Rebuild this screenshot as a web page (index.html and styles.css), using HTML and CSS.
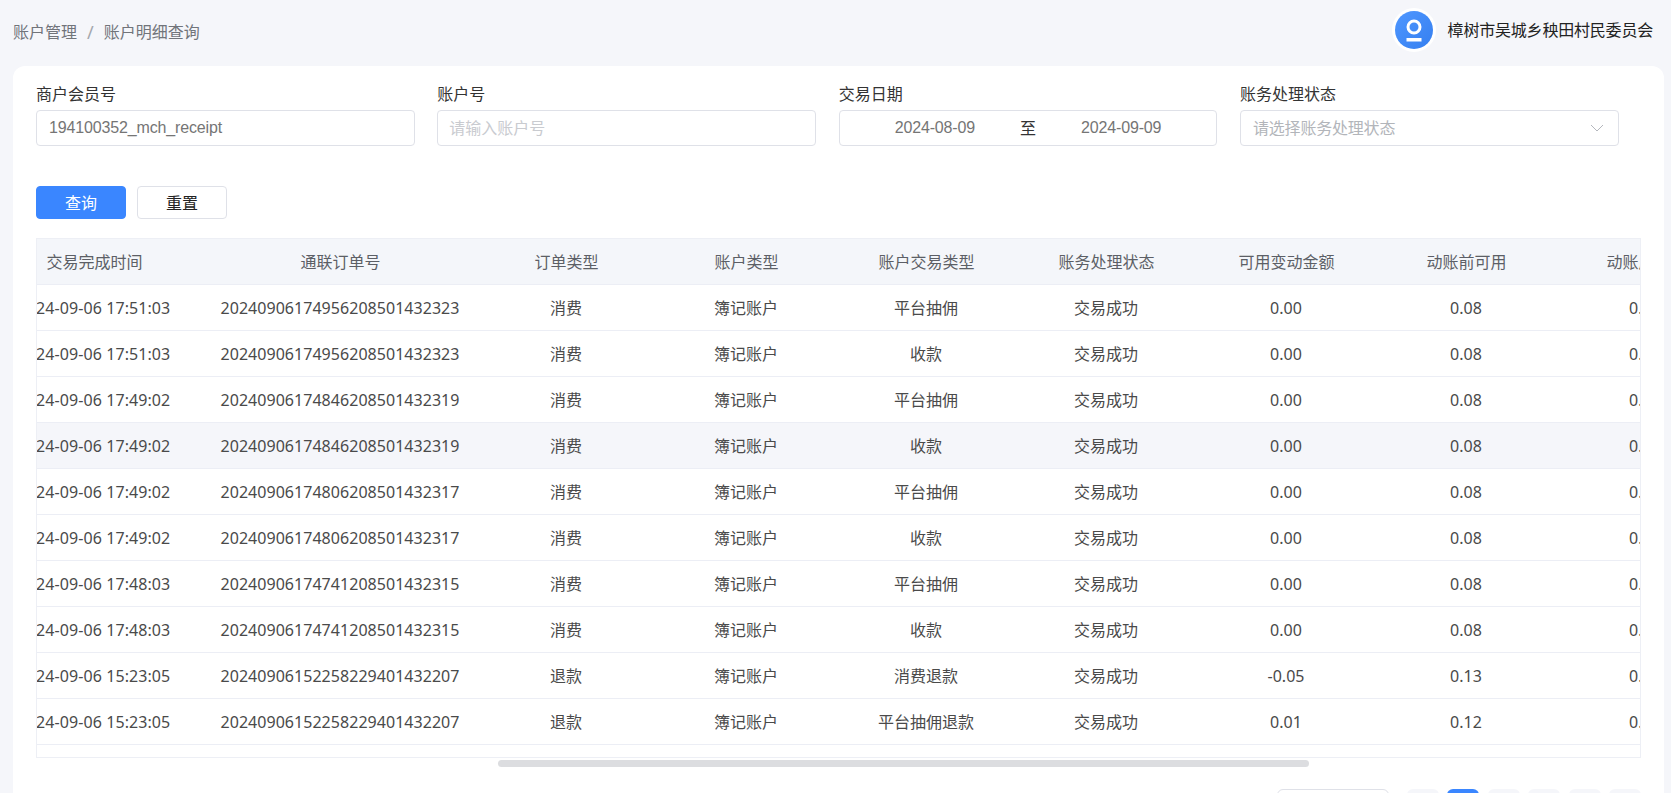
FILE: index.html
```html
<!DOCTYPE html>
<html lang="zh-CN">
<head>
<meta charset="utf-8">
<title>账户明细查询</title>
<link rel="stylesheet" href="styles.css">
</head>
<body>
<header class="topbar">
  <nav class="crumbs"><span>账户管理</span><span class="sep">/</span><span>账户明细查询</span></nav>
  <div class="user">
    <svg class="avatar" width="46" height="44" viewBox="0 0 46 44">
      <defs><linearGradient id="ag" x1="0" y1="0" x2="1" y2="1"><stop offset="0" stop-color="#4f97ff"/><stop offset="1" stop-color="#357ff0"/></linearGradient></defs>
      <circle cx="23" cy="22" r="22" fill="#fff"/>
      <circle cx="23" cy="22" r="19" fill="url(#ag)"/>
      <circle cx="23" cy="19" r="6" fill="none" stroke="#fff" stroke-width="3"/>
      <rect x="15.5" y="30" width="15" height="3.5" fill="#fff"/>
    </svg>
    <span class="user-name">樟树市吴城乡秧田村民委员会</span>
  </div>
</header>
<main class="card">
  <form class="filters">
    <div class="field"><label class="field-label">商户会员号</label><div class="input value">194100352_mch_receipt</div></div>
    <div class="field"><label class="field-label">账户号</label><div class="input placeholder">请输入账户号</div></div>
    <div class="field"><label class="field-label">交易日期</label><div class="input range"><span class="value">2024-08-09</span><span class="to">至</span><span class="value">2024-09-09</span></div></div>
    <div class="field"><label class="field-label">账务处理状态</label><div class="input select placeholder-dim"><span>请选择账务处理状态</span><svg class="chevron" width="14" height="8" viewBox="0 0 14 8"><path d="M1 1l6 6 6-6" fill="none" stroke="#b4b7bd" stroke-width="1"/></svg></div></div>
  </form>
  <div class="actions"><button type="button" class="btn primary">查询</button><button type="button" class="btn">重置</button></div>
  <div class="table-wrap">
    <table class="grid">
      <colgroup><col class="c-time"><col class="c-order"><col class="c-n"><col class="c-n"><col class="c-n"><col class="c-n"><col class="c-n"><col class="c-n"><col class="c-n"></colgroup>
      <thead><tr><th>交易完成时间</th><th>通联订单号</th><th>订单类型</th><th>账户类型</th><th>账户交易类型</th><th>账务处理状态</th><th>可用变动金额</th><th>动账前可用</th><th>动账后可用</th></tr></thead>
      <tbody>
        <tr><td>2024-09-06 17:51:03</td><td>20240906174956208501432323</td><td>消费</td><td>簿记账户</td><td>平台抽佣</td><td>交易成功</td><td>0.00</td><td>0.08</td><td>0.08</td></tr>
        <tr><td>2024-09-06 17:51:03</td><td>20240906174956208501432323</td><td>消费</td><td>簿记账户</td><td>收款</td><td>交易成功</td><td>0.00</td><td>0.08</td><td>0.08</td></tr>
        <tr><td>2024-09-06 17:49:02</td><td>20240906174846208501432319</td><td>消费</td><td>簿记账户</td><td>平台抽佣</td><td>交易成功</td><td>0.00</td><td>0.08</td><td>0.08</td></tr>
        <tr class="hover"><td>2024-09-06 17:49:02</td><td>20240906174846208501432319</td><td>消费</td><td>簿记账户</td><td>收款</td><td>交易成功</td><td>0.00</td><td>0.08</td><td>0.08</td></tr>
        <tr><td>2024-09-06 17:49:02</td><td>20240906174806208501432317</td><td>消费</td><td>簿记账户</td><td>平台抽佣</td><td>交易成功</td><td>0.00</td><td>0.08</td><td>0.08</td></tr>
        <tr><td>2024-09-06 17:49:02</td><td>20240906174806208501432317</td><td>消费</td><td>簿记账户</td><td>收款</td><td>交易成功</td><td>0.00</td><td>0.08</td><td>0.08</td></tr>
        <tr><td>2024-09-06 17:48:03</td><td>20240906174741208501432315</td><td>消费</td><td>簿记账户</td><td>平台抽佣</td><td>交易成功</td><td>0.00</td><td>0.08</td><td>0.08</td></tr>
        <tr><td>2024-09-06 17:48:03</td><td>20240906174741208501432315</td><td>消费</td><td>簿记账户</td><td>收款</td><td>交易成功</td><td>0.00</td><td>0.08</td><td>0.08</td></tr>
        <tr><td>2024-09-06 15:23:05</td><td>20240906152258229401432207</td><td>退款</td><td>簿记账户</td><td>消费退款</td><td>交易成功</td><td>-0.05</td><td>0.13</td><td>0.08</td></tr>
        <tr><td>2024-09-06 15:23:05</td><td>20240906152258229401432207</td><td>退款</td><td>簿记账户</td><td>平台抽佣退款</td><td>交易成功</td><td>0.01</td><td>0.12</td><td>0.13</td></tr>
      </tbody>
    </table>
  </div>
  <div class="scroll-track"><div class="scroll-thumb"></div></div>
  <div class="pager">
    <div class="page-size"></div>
    <div class="page"></div>
    <div class="page active"></div>
    <div class="page"></div>
    <div class="page"></div>
    <div class="page"></div>
    <div class="page"></div>
  </div>
</main>
</body>
</html>
```
FILE: styles.css
```css
* { box-sizing: border-box; }
html, body { margin: 0; height: 793px; overflow: hidden; }
body {
  background: #f5f6fa;
  font-family: "Noto Sans", "Noto Sans CJK SC", sans-serif;
  font-size: 16px;
  color: #333;
}
.topbar {
  height: 66px;
  padding: 8px 18px 0 13px;
  display: flex;
  justify-content: space-between;
  align-items: flex-start;
}
.crumbs {
  display: flex;
  gap: 9px;
  height: 48px;
  align-items: center;
  color: #71747a;
  line-height: 20px;
}
.crumbs .sep { color: #a4a7ad; margin: 0 1px; font-size: 18px; }
.user { display: flex; align-items: center; gap: 11px; }
.avatar { display: block; }
.user-name { color: #222; line-height: 20px; letter-spacing: -0.2px; }
.card {
  margin: 0 7px 0 13px;
  height: 760px;
  background: #fff;
  border-radius: 12px 12px 0 0;
  padding: 18px 23px 0;
}
.filters {
  display: grid;
  grid-template-columns: repeat(4, 401.33px);
  margin: 0;
}
.field { padding-right: 22.5px; }
.field-label {
  display: block;
  height: 26px;
  line-height: 20px;
  color: #333;
}
.input {
  height: 36px;
  border: 1px solid #dfe1e8;
  border-radius: 4px;
  padding: 0 12px;
  line-height: 34px;
  font-family: "Liberation Sans", "Noto Sans CJK SC", sans-serif;
}
.value { color: #757575; letter-spacing: -0.15px; }
.placeholder { padding-left: 11px; color: #c9cbd0; font-family: "Noto Sans", "Noto Sans CJK SC", sans-serif; }
.placeholder-dim { color: #b2b5ba; font-family: "Noto Sans", "Noto Sans CJK SC", sans-serif; letter-spacing: -0.2px; }
.range { display: flex; padding: 0 0 0 55px; }
.range .to { margin: 0 45px; width: 16px; color: #333; font-family: "Noto Sans", "Noto Sans CJK SC", sans-serif; }
.select { display: flex; justify-content: space-between; align-items: center; }
.chevron { margin-right: 2px; }
.actions { display: flex; gap: 11px; margin-top: 40px; }
.btn {
  width: 90px;
  height: 33px;
  padding: 0 0 2px;
  border: 1px solid #dfe1e8;
  border-radius: 4px;
  background: #fff;
  color: #222;
  font: 16px "Noto Sans", "Noto Sans CJK SC", sans-serif;
}
.btn.primary { background: #3a86ff; border-color: #3a86ff; color: #fff; }
.table-wrap {
  margin-top: 19px;
  width: 1605px;
  height: 520px;
  overflow: hidden;
  border: 1px solid #edeff5;
}
.grid {
  table-layout: fixed;
  border-collapse: collapse;
  width: 1752px;
  margin-left: -53px;
  color: #4a4a4a;
}
.c-time { width: 220px; }
.c-order { width: 272px; }
.c-n { width: 180px; }
.grid th {
  height: 45px;
  background: #f4f6fa;
  font-weight: 400;
  color: #5c5f66;
  text-align: center;
  border-bottom: 1px solid #eceef5;
  padding: 0 0 0 1px;
}
.grid td {
  height: 46px;
  text-align: center;
  border-bottom: 1px solid #eceef5;
  padding: 0;
  white-space: nowrap;
}
.grid td:nth-child(1),
.grid td:nth-child(2),
.grid td:nth-child(7),
.grid td:nth-child(8),
.grid td:nth-child(9) {
  padding-top: 2px;
  letter-spacing: 0.04px;
}
.grid td:nth-child(1) { letter-spacing: 0.08px; }
.grid td:nth-child(9) { padding-right: 2px; }
.grid .hover td { background: #f5f6fa; }
.scroll-track { height: 7px; margin-top: 2px; padding-left: 462px; }
.scroll-thumb { width: 811px; height: 7px; border-radius: 4px; background: #dcdde0; }
.pager {
  display: flex;
  margin-top: 22px;
  width: 1605px;
  justify-content: flex-end;
  gap: 8.4px;
}
.page-size {
  width: 112px;
  height: 32px;
  border: 1px solid #dfe1e8;
  border-radius: 6px;
  margin-right: 9.6px;
}
.page { width: 32px; height: 32px; border-radius: 6px; background: #f5f6fa; }
.page.active { background: #3a86ff; }
```
